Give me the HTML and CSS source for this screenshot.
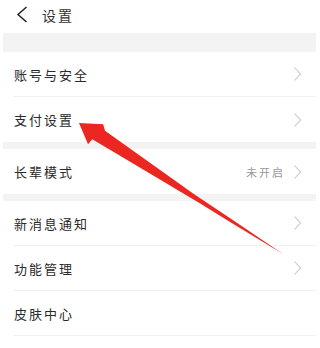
FILE: index.html
```html
<!DOCTYPE html>
<html lang="zh-CN">
<head>
<meta charset="utf-8">
<link rel="stylesheet" href="styles.css">
</head>
<body>
<div class="page">
  <div class="header">
    <svg class="back" width="12" height="17" viewBox="0 0 12 17"><path d="M10.5 1 L2 8.5 L10.5 16" fill="none" stroke="#222" stroke-width="1.5"/></svg>
    <span class="title">设置</span>
  </div>
  <div class="band tall"></div>
  <div class="group">
    <div class="row"><span class="label">账号与安全</span><svg class="chev" width="9" height="16" viewBox="0 0 9 16"><path d="M1.5 1.5 L7.5 8 L1.5 14.5" fill="none" stroke="#c6c6c6" stroke-width="1.1"/></svg></div>
    <div class="row"><span class="label">支付设置</span><svg class="chev" width="9" height="16" viewBox="0 0 9 16"><path d="M1.5 1.5 L7.5 8 L1.5 14.5" fill="none" stroke="#c6c6c6" stroke-width="1.1"/></svg></div>
  </div>
  <div class="band"></div>
  <div class="group">
    <div class="row"><span class="label">长辈模式</span><span class="value">未开启</span><svg class="chev" width="9" height="16" viewBox="0 0 9 16"><path d="M1.5 1.5 L7.5 8 L1.5 14.5" fill="none" stroke="#c6c6c6" stroke-width="1.1"/></svg></div>
  </div>
  <div class="band"></div>
  <div class="group">
    <div class="row"><span class="label">新消息通知</span><svg class="chev" width="9" height="16" viewBox="0 0 9 16"><path d="M1.5 1.5 L7.5 8 L1.5 14.5" fill="none" stroke="#c6c6c6" stroke-width="1.1"/></svg></div>
    <div class="row"><span class="label">功能管理</span><svg class="chev" width="9" height="16" viewBox="0 0 9 16"><path d="M1.5 1.5 L7.5 8 L1.5 14.5" fill="none" stroke="#c6c6c6" stroke-width="1.1"/></svg></div>
    <div class="row"><span class="label">皮肤中心</span></div>
  </div>
</div>
<svg class="arrow" width="320" height="348" viewBox="0 0 320 348">
  <polygon points="79,123 103.2,124.2 105,130.7 193.8,194.1 232.8,220.1 283,254 236.6,225.9 199.8,203.3 92.3,139.3 88,144.2" fill="#ec2620"/>
</svg>
</body>
</html>
```
FILE: styles.css
```css
html, body {
  margin: 0;
  padding: 0;
  background: #fff;
}
body {
  width: 320px;
  height: 348px;
  overflow: hidden;
  position: relative;
  font-family: "Noto Sans CJK SC", "Noto Sans", sans-serif;
}
.page {
  margin: 0 4px 0 3px;
}
.header {
  height: 33px;
  display: flex;
  align-items: center;
  padding-left: 13px;
  box-sizing: border-box;
  padding-bottom: 4px;
}
.back {
  display: block;
}
.title {
  margin-left: 14px;
  font-size: 14px;
  letter-spacing: 2px;
  color: #333;
}
.band {
  height: 7px;
  background: #f3f3f3;
}
.band.tall {
  height: 19px;
}
.row {
  height: 45px;
  display: flex;
  align-items: center;
  margin-left: 11px;
  padding-right: 14px;
  border-bottom: 1px solid #f0f0f0;
  box-sizing: border-box;
}
.group .row:last-child {
  border-bottom: none;
}
.group:last-child .row:last-child {
  border-bottom: 1px solid #f0f0f0;
}
.label {
  flex: 1;
  font-size: 13px;
  letter-spacing: 2px;
  color: #2a2a2a;
}
.value {
  font-size: 11px;
  letter-spacing: 2px;
  color: #999;
  margin-right: 8px;
}
.chev {
  display: block;
}
.arrow {
  position: absolute;
  top: 0;
  left: 0;
  pointer-events: none;
}
```
